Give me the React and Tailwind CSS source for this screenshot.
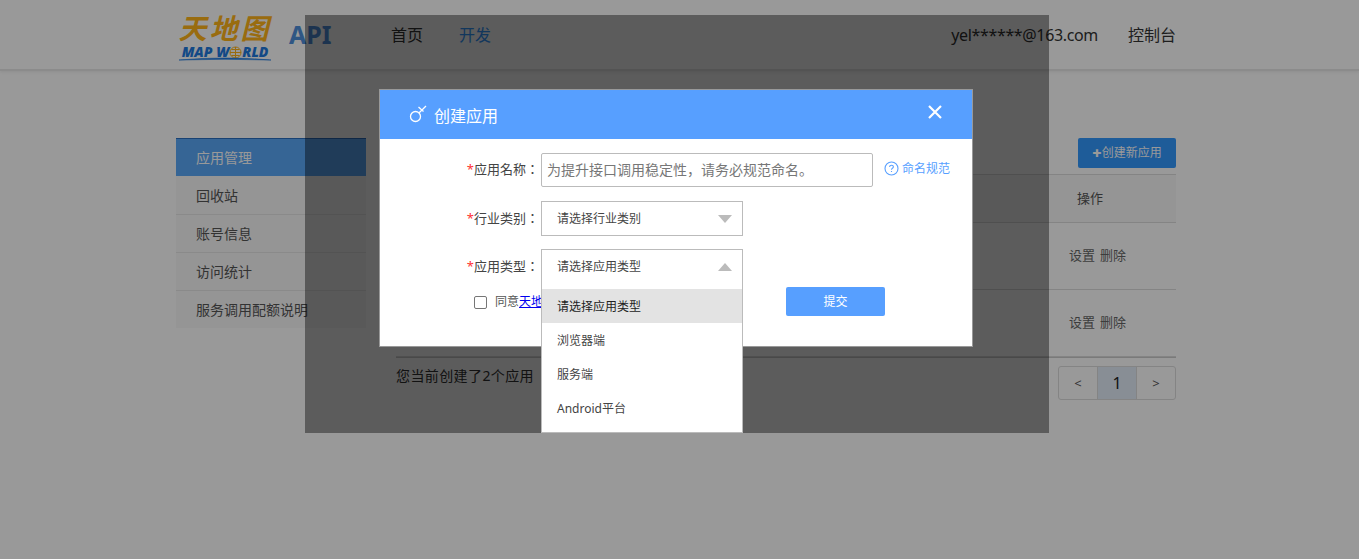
import React from 'react';

const FONT = "font-['Noto_Sans','Noto_Sans_CJK_SC',sans-serif]";

const MENU = ['回收站', '账号信息', '访问统计', '服务调用配额说明'];
const TYPES = ['浏览器端', '服务端', 'Android平台'];

const KeyIcon = () => (
  <svg width="20" height="20" viewBox="0 0 20 20" fill="none" stroke="#fff" strokeWidth="1.3" className="-mt-[2px]">
    <circle cx="6.5" cy="12.5" r="5" />
    <path d="M10.2 8.8 L17 2 M9.5 3 L14.5 7.5" />
  </svg>
);

const Logo = () => (
  <div className="w-[94px] flex flex-col items-center mt-[5px]">
    <div className="text-[28px] leading-[28px] font-bold italic text-[#ffb419] tracking-[3px] whitespace-nowrap">天地图</div>
    <div className="flex items-center whitespace-nowrap text-[14px] leading-[14px] font-black italic text-[#1f7ae0] mt-[3px]">
      <span>MAP&nbsp;W</span>
      <svg width="13" height="13" viewBox="0 0 13 13" fill="none" stroke="#ffb419" strokeWidth="1">
        <circle cx="6.5" cy="6.5" r="5.5" />
        <path d="M1 6.5 H12 M6.5 1 V12 M2.5 3.5 H10.5 M2.5 9.5 H10.5" />
      </svg>
      <span>RLD</span>
    </div>
    <svg width="92" height="4" viewBox="0 0 92 4" className="-mt-[2px]">
      <path d="M0 3 Q46 -1 92 3 Q46 1.5 0 3 Z" fill="#1f7ae0" stroke="#1f7ae0" strokeWidth="0.6" />
    </svg>
  </div>
);

const Row = () => (
  <div className="h-[67px] border-b border-[#ddd] flex items-center justify-end pr-[50px] text-[13px] text-[#666]">
    <span>设置</span>
    <span className="ml-[5px]">删除</span>
  </div>
);

const Label = ({ children }) => (
  <div className="w-[161px] text-right text-[13px] text-[#444] pr-[2px] shrink-0 font-['Noto_Sans','Noto_Sans_CJK_TC',sans-serif]">
    <span className="text-[#f33]">*</span>{children}：
  </div>
);

const Caret = ({ up }) => (
  <span
    className={
      up
        ? 'w-0 h-0 border-x-[7px] border-x-transparent border-b-[8px] border-b-[#bbb]'
        : 'w-0 h-0 border-x-[7px] border-x-transparent border-t-[8px] border-t-[#bbb]'
    }
  />
);

export default function App() {
  return (
    <div className={`relative h-[559px] overflow-hidden bg-white ${FONT}`}>
      {/* Header */}
      <header className="h-[71px] pt-[1px] border-b-2 border-[#e8e8e8] shadow-[0_1px_3px_rgba(0,0,0,0.08)] flex items-center pl-[178px] pr-[183px]">
        <Logo />
        <div className="ml-[17px] text-[25px] font-bold text-[#4f8fdc] w-[102px]">API</div>
        <nav className="flex gap-[36px] text-[16px] text-[#333]">
          <span>首页</span>
          <span className="text-[#3399ff]">开发</span>
        </nav>
        <div className="ml-auto flex gap-[30px] text-[16px] text-[#333]">
          <span className="tracking-[-0.35px]">yel******@163.com</span>
          <span>控制台</span>
        </div>
      </header>

      {/* Page body */}
      <main className="w-[1000px] ml-[176px] mt-[67px] flex gap-[30px]">
        <aside className="w-[190px] shrink-0 self-start text-[14px] bg-[#f8f8f8]">
          <div className="h-[38px] bg-[#5aa8f8] border-t border-[#2a6fc0] flex items-center pl-[20px] text-white mb-[1px]">应用管理</div>
          {MENU.map((m, i) => (
            <div
              key={m}
              className={`flex items-center pl-[20px] text-[#555] ${i < 3 ? 'h-[38px] border-b border-[#e6e6e6]' : 'h-[37px]'}`}
            >
              {m}
            </div>
          ))}
        </aside>
        <section className="flex-1">
          <div className="flex justify-end">
            <button className="w-[98px] h-[30px] bg-[#3399ff] rounded-[2px] text-white text-[12px] flex items-center justify-center">
              <span className="font-black text-[16px] leading-[16px]">+</span>创建新应用
            </button>
          </div>
          <div className="mt-[6px] h-[49px] bg-[#f8f8f8] border-y border-[#ddd] flex items-center justify-end pr-[73px] text-[13px] text-[#555]">
            操作
          </div>
          <Row />
          <Row />
          <div className="h-[1px] bg-[#ccc]" />
          <div className="flex justify-between items-start mt-[8px]">
            <span className="text-[14px] text-[#333] leading-[20px] tracking-[0.4px]">您当前创建了2个应用</span>
            <div className="w-[118px] h-[34px] flex border border-[#ddd] rounded-[3px] text-center leading-[32px] text-[#555] text-[13px]">
              <span className="flex-1">&lt;</span>
              <span className="flex-1 bg-[#e3edf8] border-x border-[#ddd] text-[16px] text-[#222]">1</span>
              <span className="flex-1">&gt;</span>
            </div>
          </div>
        </section>
      </main>

      {/* Mask */}
      <div className="absolute inset-0 bg-black/40" />

      {/* Dialog frame */}
      <div className="absolute left-[305px] top-[15px] w-[744px] h-[418px] bg-black/40 overflow-hidden">
        <div className="absolute left-[74px] top-[74px] w-[594px] h-[258px] bg-white border border-[#999]">
          <div className="h-[49px] bg-[#579fff] flex items-center pl-[29px] pr-[30px] text-white">
            <KeyIcon />
            <span className="ml-[5px] text-[16px] mt-[3px]">创建应用</span>
            <svg width="14" height="14" viewBox="0 0 14 14" className="ml-auto -mt-[6px]" stroke="#fff" strokeWidth="2.2">
              <path d="M1 1 L13 13 M13 1 L1 13" />
            </svg>
          </div>

          <div className="pt-[14px]">
            <div className="flex items-center">
              <Label>应用名称</Label>
              <div className="w-[332px] h-[34px] border border-[#bbb] rounded-[2px] pl-[5px] pb-[2px] flex items-center text-[14px] text-[#777]">
                为提升接口调用稳定性，请务必规范命名。
              </div>
              <svg width="15" height="15" viewBox="0 0 15 15" fill="none" stroke="#579fff" strokeWidth="1.1" className="ml-[11px] -mt-[4px]">
                <circle cx="7.5" cy="7.5" r="6.5" />
                <path d="M5.6 6 Q5.6 4.2 7.5 4.2 Q9.4 4.2 9.4 5.8 Q9.4 6.8 8.2 7.4 Q7.5 7.8 7.5 8.8 M7.5 10 V11" />
              </svg>
              <span className="ml-[3px] -mt-[3px] text-[12px] text-[#579fff]">命名规范</span>
            </div>

            <div className="flex items-center mt-[14px]">
              <Label>行业类别</Label>
              <div className="w-[202px] h-[35px] border border-[#bbb] flex items-center justify-between pl-[15px] pr-[10px] text-[12px] text-[#444]">
                请选择行业类别
                <Caret />
              </div>
            </div>

            <div className="flex items-center mt-[13px]">
              <Label>应用类型</Label>
              <div className="relative w-[202px] h-[40px] border-x border-t border-[#bbb] flex items-center justify-between pl-[15px] pr-[10px] text-[12px] text-[#444] -mb-[5px]">
                <span className="-mt-[6px]">请选择应用类型</span>
                <span className="-mt-[6px] flex"><Caret up /></span>
                {/* open dropdown list */}
                <ul className="absolute left-[-1px] top-[39px] w-[202px] h-[144px] bg-white border border-t-0 border-[#bbb] z-10">
                  <li className="h-[34px] pt-[2px] bg-[#e3e3e3] pl-[15px] flex items-center text-[#222]">请选择应用类型</li>
                  {TYPES.map((t) => (
                    <li key={t} className="h-[34px] pt-[2px] pl-[15px] flex items-center">{t}</li>
                  ))}
                </ul>
              </div>
            </div>

            <div className="flex items-center mt-[3px] pl-[94px]">
              <span className="w-[13px] h-[13px] mt-[1px] border border-[#767676] rounded-[2px] bg-white shrink-0" />
              <span className="ml-[8px] text-[12px] text-[#555] w-[46px] shrink-0 whitespace-nowrap">
                同意<span className="text-[#00e] underline">天地</span>
              </span>
              <button className="ml-[245px] w-[99px] h-[29px] bg-[#579fff] rounded-[2px] text-white text-[12px]">提交</button>
            </div>
          </div>
        </div>
      </div>
    </div>
  );
}
